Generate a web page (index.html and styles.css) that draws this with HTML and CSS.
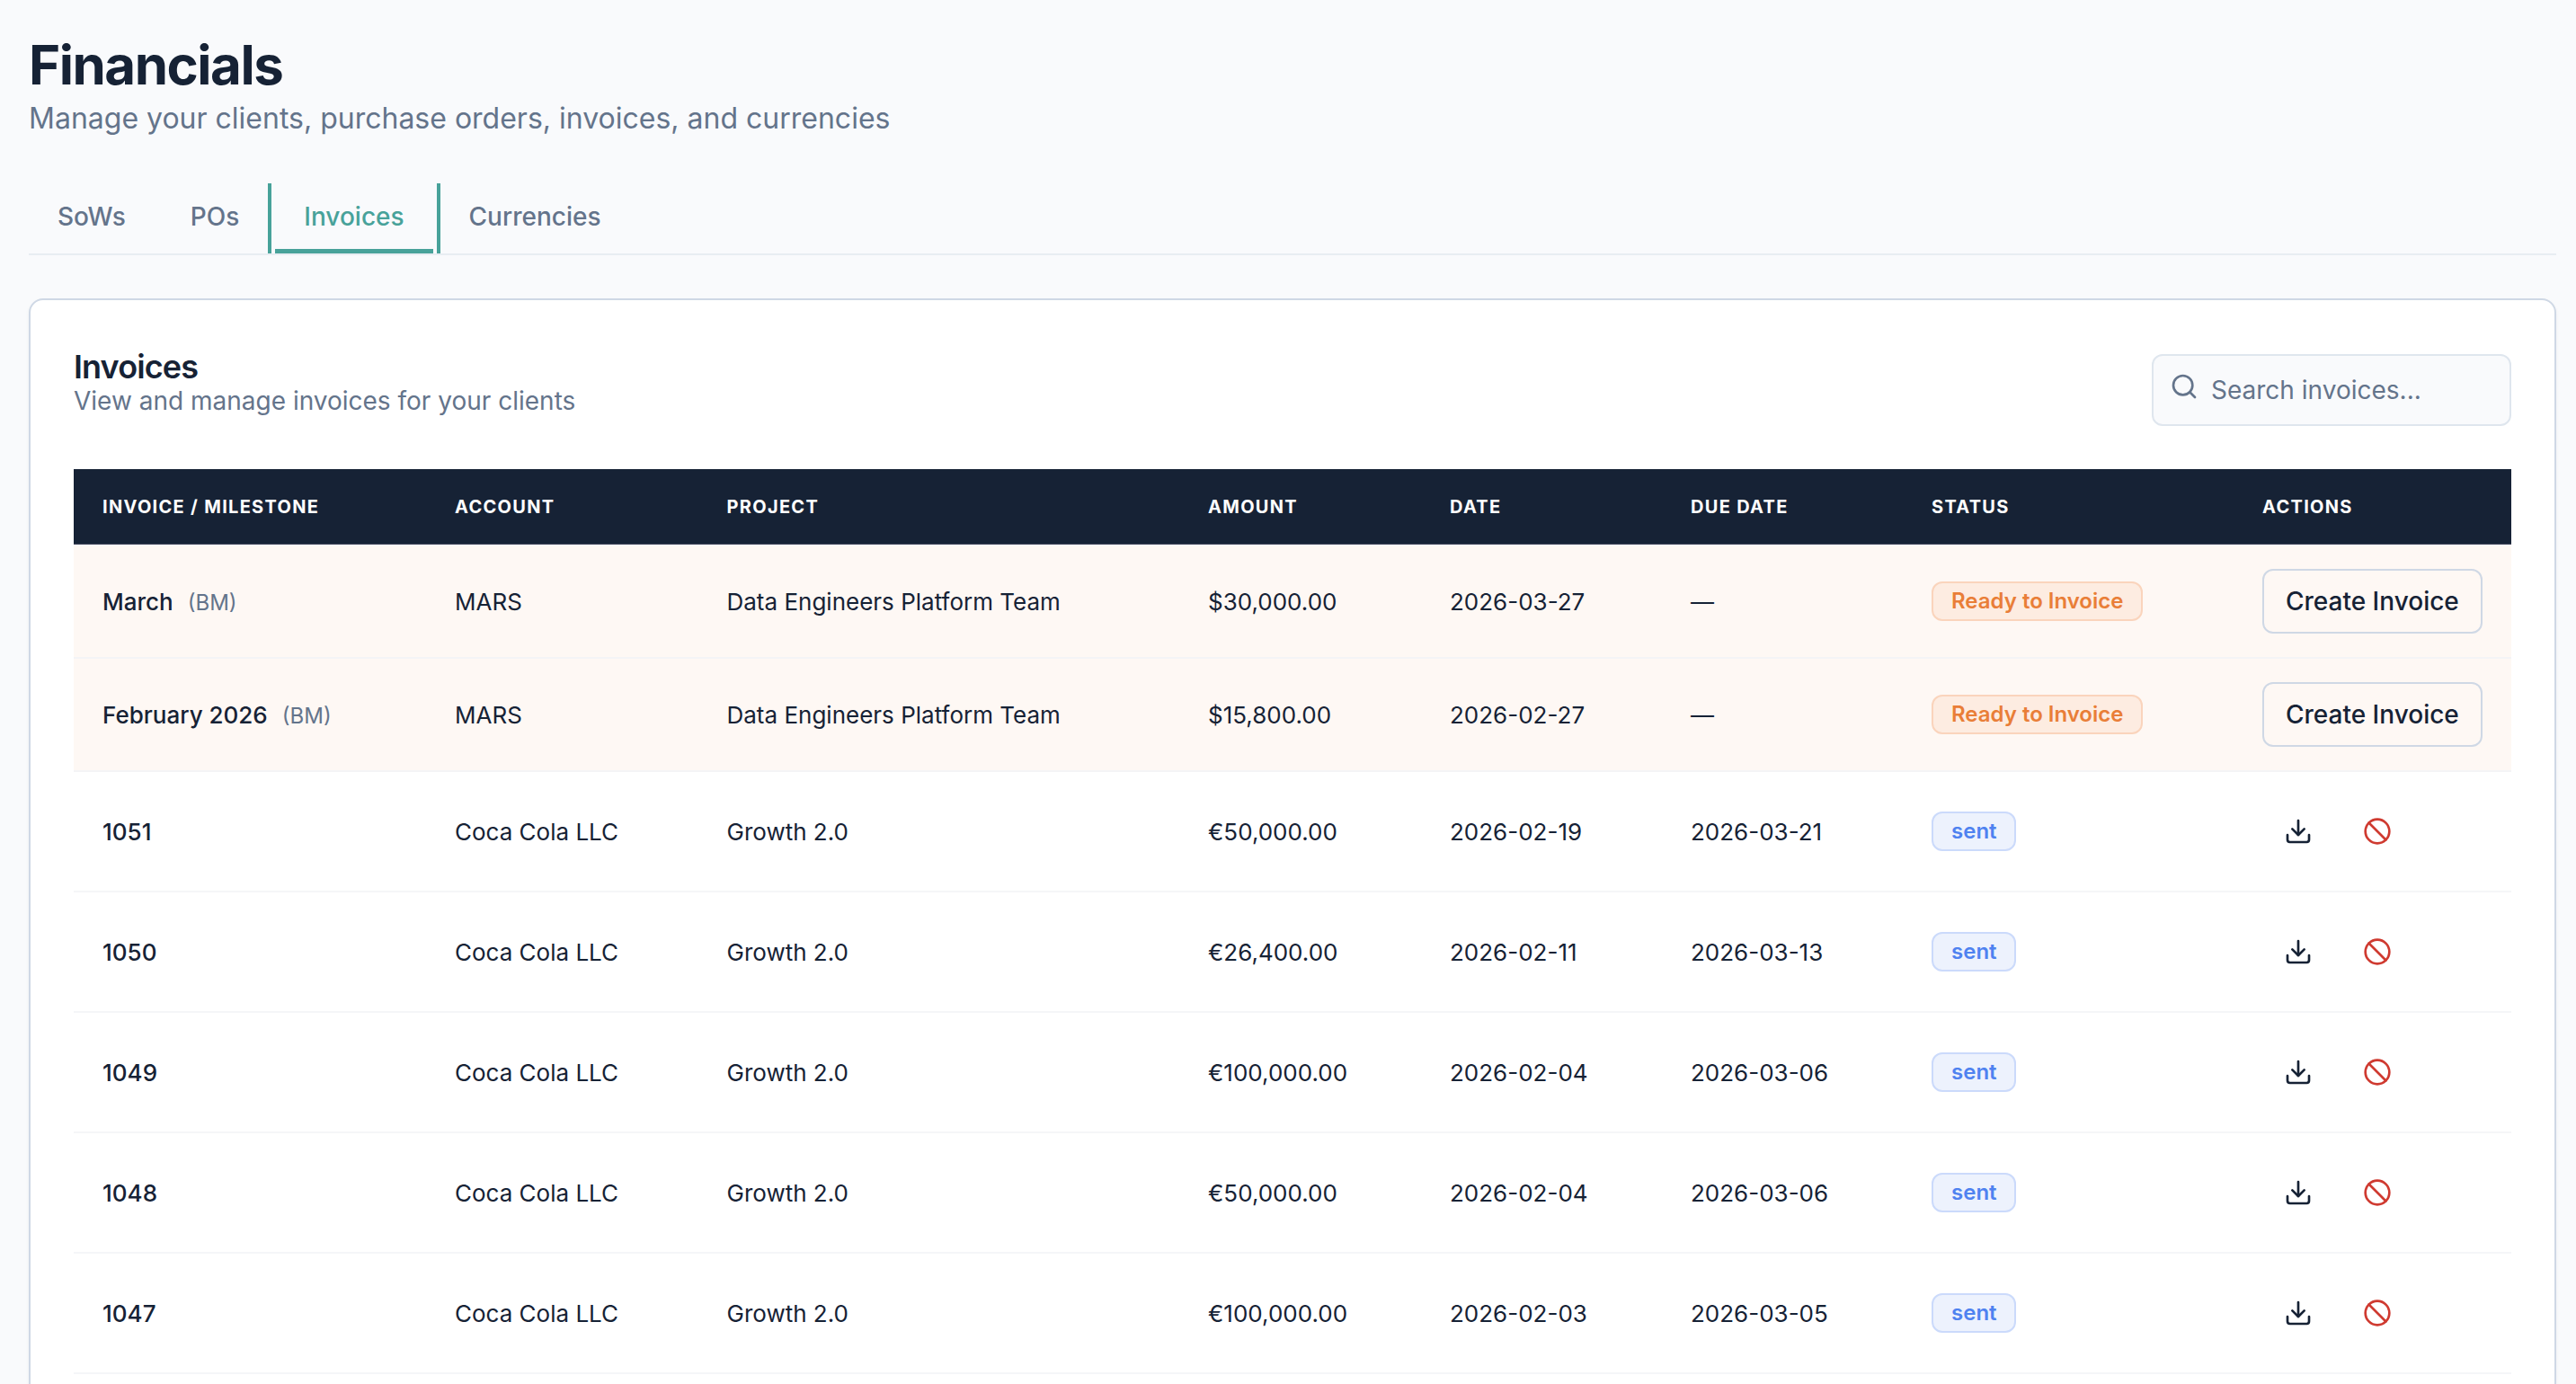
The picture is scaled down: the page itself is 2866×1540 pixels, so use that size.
FILE: index.html
```html
<!DOCTYPE html>
<html lang="en">
<head>
<meta charset="utf-8">
<title>Financials</title>
<link rel="stylesheet" href="styles.css">
</head>
<body>
<svg class="sprite" aria-hidden="true">
  <symbol id="download" viewBox="0 0 24 24"><path d="M21 15v4a2 2 0 0 1-2 2H5a2 2 0 0 1-2-2v-4"/><path d="M7 10l5 5 5-5"/><path d="M12 15V3"/></symbol>
  <symbol id="ban" viewBox="0 0 24 24"><circle cx="12" cy="12" r="10"/><path d="M4.9 4.9l14.2 14.2"/></symbol>
  <symbol id="search" viewBox="0 0 24 24"><circle cx="11" cy="11" r="8"/><path d="M21 21l-4.3-4.3"/></symbol>
</svg>
<main class="page">
  <header class="page-header">
    <h1 class="page-title">Financials</h1>
    <p class="page-subtitle">Manage your clients, purchase orders, invoices, and currencies</p>
  </header>
  <nav class="tabs">
    <a class="tab">SoWs</a>
    <a class="tab">POs</a>
    <a class="tab tab-active">Invoices</a>
    <a class="tab">Currencies</a>
  </nav>
  <section class="card">
    <div class="card-header">
      <div>
        <h2 class="card-title">Invoices</h2>
        <p class="card-subtitle">View and manage invoices for your clients</p>
      </div>
      <div class="search"><svg class="icon search-icon"><use href="#search"/></svg><span class="search-text">Search invoices...</span></div>
    </div>
    <table class="table">
      <colgroup><col class="c-invoice"><col class="c-account"><col class="c-project"><col class="c-amount"><col class="c-date"><col class="c-due"><col class="c-status"><col class="c-actions"></colgroup>
      <thead>
        <tr><th>Invoice / Milestone</th><th>Account</th><th>Project</th><th>Amount</th><th>Date</th><th>Due Date</th><th>Status</th><th>Actions</th></tr>
      </thead>
      <tbody>
        <tr class="ready ready-first"><td class="name">March<span class="tag">(BM)</span></td><td>MARS</td><td>Data Engineers Platform Team</td><td>$30,000.00</td><td>2026-03-27</td><td>—</td><td><span class="badge badge-ready">Ready to Invoice</span></td><td><button class="create">Create Invoice</button></td></tr>
        <tr class="ready"><td class="name">February 2026<span class="tag">(BM)</span></td><td>MARS</td><td>Data Engineers Platform Team</td><td>$15,800.00</td><td>2026-02-27</td><td>—</td><td><span class="badge badge-ready">Ready to Invoice</span></td><td><button class="create">Create Invoice</button></td></tr>
        <tr><td class="name">1051</td><td>Coca Cola LLC</td><td>Growth 2.0</td><td>€50,000.00</td><td>2026-02-19</td><td>2026-03-21</td><td><span class="badge badge-sent">sent</span></td><td><div class="actions"><svg class="icon"><use href="#download"/></svg><svg class="icon icon-ban"><use href="#ban"/></svg></div></td></tr>
        <tr><td class="name">1050</td><td>Coca Cola LLC</td><td>Growth 2.0</td><td>€26,400.00</td><td>2026-02-11</td><td>2026-03-13</td><td><span class="badge badge-sent">sent</span></td><td><div class="actions"><svg class="icon"><use href="#download"/></svg><svg class="icon icon-ban"><use href="#ban"/></svg></div></td></tr>
        <tr><td class="name">1049</td><td>Coca Cola LLC</td><td>Growth 2.0</td><td>€100,000.00</td><td>2026-02-04</td><td>2026-03-06</td><td><span class="badge badge-sent">sent</span></td><td><div class="actions"><svg class="icon"><use href="#download"/></svg><svg class="icon icon-ban"><use href="#ban"/></svg></div></td></tr>
        <tr><td class="name">1048</td><td>Coca Cola LLC</td><td>Growth 2.0</td><td>€50,000.00</td><td>2026-02-04</td><td>2026-03-06</td><td><span class="badge badge-sent">sent</span></td><td><div class="actions"><svg class="icon"><use href="#download"/></svg><svg class="icon icon-ban"><use href="#ban"/></svg></div></td></tr>
        <tr><td class="name">1047</td><td>Coca Cola LLC</td><td>Growth 2.0</td><td>€100,000.00</td><td>2026-02-03</td><td>2026-03-05</td><td><span class="badge badge-sent">sent</span></td><td><div class="actions"><svg class="icon"><use href="#download"/></svg><svg class="icon icon-ban"><use href="#ban"/></svg></div></td></tr>
      </tbody>
    </table>
  </section>
</main>
</body>
</html>
```
FILE: styles.css
```css
* { box-sizing: border-box; margin: 0; }

body {
  background: #f9fafc;
  color: #162235;
  font-family: Inter, "Liberation Sans", sans-serif;
  font-size: 28px;
  -webkit-font-smoothing: antialiased;
}

.sprite { display: none; }

.page {
  height: 1540px;
  overflow: hidden;
  padding: 36px 22px 0 32px;
}

.page-title { font-size: 60px; line-height: 72px; font-weight: 700; letter-spacing: -1.5px; }
.page-subtitle { font-size: 32px; line-height: 48px; color: #64748b; }

.tabs {
  display: flex;
  gap: 8px;
  height: 80px;
  margin-top: 48px;
  border-bottom: 2px solid #e8edf2;
}
.tab { position: relative; padding: 20px 32px 0; line-height: 34px; font-weight: 500; color: #64748b; }
.tab-active { color: #48a29a; border-bottom: 5px solid #48a29a; }
.tab-active::before,
.tab-active::after {
  content: "";
  position: absolute;
  top: 0;
  bottom: -5px;
  width: 4px;
  background: #48a29a;
}
.tab-active::before { left: -8px; }
.tab-active::after { right: -8px; }

.card {
  height: 1300px;
  margin-top: 48px;
  padding: 48px;
  background: #fff;
  border: 2px solid #cfd8e5;
  border-radius: 16px;
  box-shadow: 0 2px 4px rgba(21, 34, 56, 0.05);
}
.card-header { display: flex; justify-content: space-between; height: 140px; }
.card-title { margin-top: 8px; font-size: 36px; line-height: 36px; font-weight: 600; letter-spacing: -0.9px; }
.card-subtitle { line-height: 40px; color: #64748b; }

.search {
  display: flex;
  width: 400px;
  height: 80px;
  margin-top: 12px;
  padding: 18px;
  gap: 14px;
  background: #f9fafc;
  border: 2px solid #dfe6ee;
  border-radius: 12px;
  color: #64748b;
}
.search-text { line-height: 40px; }

.icon {
  display: block;
  width: 32px;
  height: 32px;
  fill: none;
  stroke: currentColor;
  stroke-width: 2;
  stroke-linecap: round;
  stroke-linejoin: round;
}

.table { width: 2712px; table-layout: fixed; border-collapse: separate; border-spacing: 0; font-size: 26px; }
.c-invoice { width: 392px; }
.c-account { width: 302.5px; }
.c-project { width: 535.5px; }
.c-amount { width: 269px; }
.c-date { width: 268px; }
.c-due { width: 268px; }
.c-status { width: 368px; }
.c-actions { width: 309px; }

th {
  height: 84px;
  padding: 0 32px;
  background: #162235;
  border-bottom: 1px solid #444a60;
  color: #fff;
  font-size: 20px;
  font-weight: 700;
  letter-spacing: 1.3px;
  text-align: left;
  text-transform: uppercase;
}
td {
  height: 134px;
  padding: 0 32px;
  border-bottom: 2px solid #f5f6f8;
  vertical-align: middle;
  white-space: nowrap;
}
.ready td { height: 126px; background: #fef8f4; border-bottom-color: #f4f4f6; }
.ready-first td { height: 127px; padding-top: 1px; }
.name { font-weight: 500; }
.tag { margin-left: 16px; font-size: 24px; font-weight: 400; color: #64748b; }

.badge {
  display: block;
  width: fit-content;
  height: 44px;
  padding: 0 20px;
  border: 2px solid;
  border-radius: 12px;
  font-size: 24px;
  line-height: 39px;
  font-weight: 600;
}
.badge-ready { color: #e97e38; background: #fdece1; border-color: #fad4bc; }
.badge-sent { padding-right: 19px; color: #4f82f0; background: #edf2fd; border-color: #cbdafb; }

.create {
  display: block;
  height: 72px;
  padding: 0 24px;
  background: transparent;
  border: 2px solid #cfd8e5;
  border-radius: 12px;
  color: #162235;
  font: 500 28px/34px Inter, "Liberation Sans", sans-serif;
  white-space: nowrap;
}

.actions { display: flex; gap: 56px; padding-left: 24px; }
.icon-ban { color: #cf3a30; }
```
